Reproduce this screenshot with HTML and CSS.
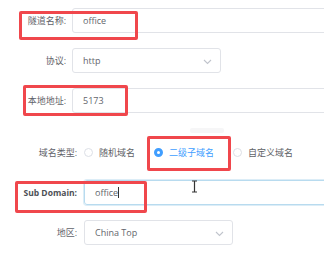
FILE: index.html
```html
<!DOCTYPE html>
<html lang="zh-CN">
<head>
<meta charset="utf-8">
<title>隧道配置</title>
<link rel="stylesheet" href="styles.css">
</head>
<body>
<div class="page">
  <div class="group group-a">
    <div class="row">
      <label class="label">隧道名称:</label>
      <div class="input wide"><span class="value">office</span></div>
    </div>
    <div class="row">
      <label class="label">协议:</label>
      <div class="input select"><span class="value">http</span>
        <svg class="chev" width="9" height="6" viewBox="0 0 9 6"><path d="M1 1l3.5 3.5L8 1" fill="none" stroke="#c0c4cc" stroke-width="1.1"/></svg>
      </div>
    </div>
    <div class="row">
      <label class="label">本地地址:</label>
      <div class="input wide"><span class="value">5173</span></div>
    </div>
  </div>
  <div class="group group-b">
    <div class="row">
      <label class="label">域名类型:</label>
      <div class="radios">
        <span class="radio"><span class="dot"></span>随机域名</span>
        <span class="radio checked"><span class="dot"></span>二级子域名</span>
        <span class="radio"><span class="dot"></span>自定义域名</span>
      </div>
    </div>
    <div class="row">
      <label class="label bold">Sub Domain:</label>
      <div class="input wide focus"><span class="value">office</span><span class="caret"></span></div>
    </div>
    <div class="row">
      <label class="label">地区:</label>
      <div class="input select"><span class="value">China Top</span>
        <svg class="chev" width="9" height="6" viewBox="0 0 9 6"><path d="M1 1l3.5 3.5L8 1" fill="none" stroke="#c0c4cc" stroke-width="1.1"/></svg>
      </div>
    </div>
  </div>

  <div class="mark m1"></div>
  <div class="mark m2"></div>
  <div class="mark m3"></div>
  <div class="mark m4"></div>
  <svg class="ibeam" width="7" height="13" viewBox="0 0 7 13"><path d="M1 1h2.5M3.5 1h2.5M3.5 1v11M1 12h5" fill="none" stroke="#333" stroke-width="1.2"/></svg>
  <div class="ghost"></div>
</div>
</body>
</html>
```

FILE: styles.css
```css
html, body {
  margin: 0;
  padding: 0;
  background: #fff;
  overflow: hidden;
}
.page {
  position: relative;
  width: 324px;
  height: 266px;
  overflow: hidden;
  font-family: "Open Sans", "Noto Sans CJK SC", sans-serif;
  font-size: 9px;
  color: #606266;
  padding-top: 8px;
  box-sizing: border-box;
}
.group {
  display: flex;
  flex-direction: column;
  gap: 15px;
}
.group-b {
  margin-top: 27px;
}
.row {
  display: flex;
  align-items: center;
  height: 25px;
}
.group-a .label {
  width: 66px;
  margin-right: 6px;
}
.group-b .label {
  width: 77px;
  margin-right: 7px;
}
.label {
  flex: none;
  text-align: right;
  white-space: nowrap;
  color: #5f6269;
}
.label.bold {
  font-weight: 700;
  font-size: 8.5px;
  color: #4d5056;
}
.input {
  position: relative;
  height: 25px;
  box-sizing: border-box;
  border: 1px solid #e1e3e8;
  border-radius: 3px;
  display: flex;
  align-items: center;
  padding-left: 10px;
  font-size: 9px;
  color: #63666c;
}
.input.wide {
  width: 280px;
  flex: none;
}
.input.select {
  width: 149px;
  flex: none;
}
.input.focus {
  border-color: #b8dbef;
  box-shadow: 0 0 0 1px #dcedf7;
}
.chev {
  position: absolute;
  right: 8px;
  top: 10px;
}
.caret {
  display: inline-block;
  width: 1px;
  height: 11px;
  background: #333;
}
.radios {
  display: flex;
  align-items: center;
  gap: 19px;
}
.radio {
  display: flex;
  align-items: center;
  gap: 6px;
  color: #606266;
}
.dot {
  width: 9px;
  height: 9px;
  box-sizing: border-box;
  border: 1px solid #dcdfe6;
  border-radius: 50%;
  background: #fff;
}
.radio.checked {
  color: #409eff;
}
.radio.checked .dot {
  border: 3px solid #409eff;
  background: #fff;
}
.mark {
  position: absolute;
  border: 3px solid #f0474c;
  border-radius: 2px;
  box-sizing: border-box;
}
.m1 { left: 19px; top: 11px; width: 119px; height: 29px; }
.m2 { left: 23px; top: 85px; width: 105px; height: 31px; }
.m3 { left: 147px; top: 136px; width: 84px; height: 35px; }
.m4 { left: 15px; top: 181px; width: 132px; height: 32px; }
.ibeam {
  position: absolute;
  left: 191px;
  top: 180px;
}
.ghost {
  position: absolute;
  left: 190px;
  top: 128px;
  width: 34px;
  height: 5px;
  background: #f6f6f7;
  border-radius: 2px;
}
```
